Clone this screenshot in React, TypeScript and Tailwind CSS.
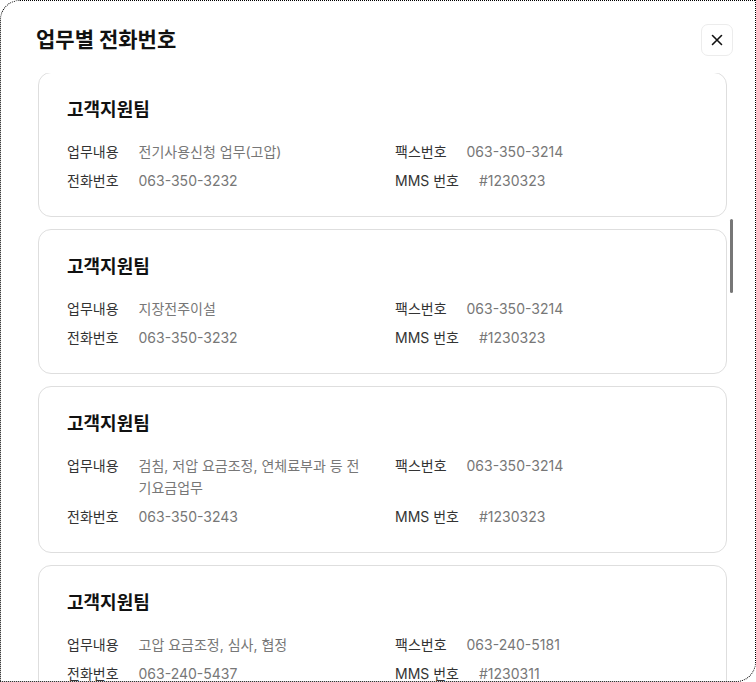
import React from "react";

type Item = { team: string; work: string; tel: string; fax: string; mms: string };

const items: Item[] = [
  { team: "고객지원팀", work: "전기사용신청 업무(고압)", tel: "063-350-3232", fax: "063-350-3214", mms: "#1230323" },
  { team: "고객지원팀", work: "지장전주이설", tel: "063-350-3232", fax: "063-350-3214", mms: "#1230323" },
  { team: "고객지원팀", work: "검침, 저압 요금조정, 연체료부과 등 전기요금업무", tel: "063-350-3243", fax: "063-350-3214", mms: "#1230323" },
  { team: "고객지원팀", work: "고압 요금조정, 심사, 협정", tel: "063-240-5437", fax: "063-240-5181", mms: "#1230311" },
];

function Row({ label, value }: { label: string; value: string }) {
  return (
    <div className="flex gap-5 text-[14px] leading-[22px]">
      <div className="shrink-0 text-[#333333]">{label}</div>
      <div className="min-w-0 text-[#777777]">{value}</div>
    </div>
  );
}

function Card({ it }: { it: Item }) {
  return (
    <div className="rounded-[13px] border border-[#dedede] bg-white pl-7 pr-7 pt-[23px] pb-6">
      <div className="text-[18px] leading-[28px] font-bold text-[#111111]">{it.team}</div>
      <div className="mt-[17px] grid grid-cols-2 gap-x-[25px] gap-y-[7px]">
        <Row label="업무내용" value={it.work} />
        <Row label="팩스번호" value={it.fax} />
        <Row label="전화번호" value={it.tel} />
        <Row label="MMS 번호" value={it.mms} />
      </div>
    </div>
  );
}

export default function App() {
  return (
    <div className="w-[756px] h-[682px] bg-white font-['Inter','Noto_Sans_CJK_KR',sans-serif]">
      <div className="flex h-full w-full flex-col overflow-hidden rounded-tl-[20px] rounded-br-[20px] border border-dotted border-black bg-white">
        <div className="flex h-[72px] shrink-0 items-start justify-between pl-[35px] pr-[22px] pt-[23px]">
          <h2 className="text-[21px] leading-[32px] font-bold text-[#111111]">업무별 전화번호</h2>
          <button className="flex h-8 w-8 items-center justify-center rounded-[7px] border border-[#ececec] bg-white text-[#111111]">
            <svg width="12" height="12" viewBox="0 0 12 12" fill="none">
              <path d="M1.5 1.5L10.5 10.5M10.5 1.5L1.5 10.5" stroke="currentColor" strokeWidth="1.6" strokeLinecap="round" />
            </svg>
          </button>
        </div>
        <div className="relative min-h-0 flex-1 overflow-hidden">
          <div className="-mt-px flex flex-col gap-3 pl-[37px] pr-[28px]">
            {items.map((it, i) => (
              <Card key={i} it={it} />
            ))}
          </div>
          <div className="absolute right-[22px] top-[146px] h-[74px] w-[3px] rounded-full bg-[#777777]" />
        </div>
      </div>
    </div>
  );
}
